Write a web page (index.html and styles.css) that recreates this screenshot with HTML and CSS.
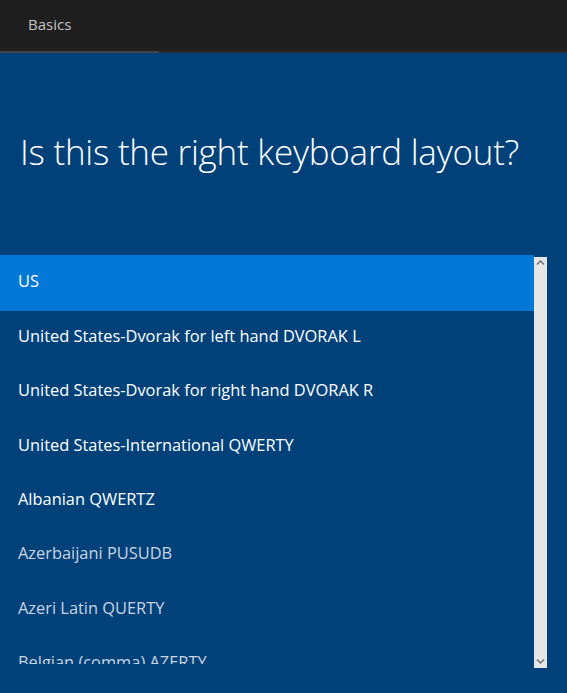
FILE: index.html
```html
<!DOCTYPE html>
<html>
<head>
<meta charset="utf-8">
<link rel="stylesheet" href="styles.css">
</head>
<body>
<header class="topbar">
  <span class="topbar-title">Basics</span>
</header>
<div class="topline"><div class="topline-progress"></div></div>
<main class="page">
  <h1 class="heading">Is this the right keyboard layout?</h1>
  <div class="listwrap">
    <ul class="list">
      <li class="item selected">US</li>
      <li class="item">United States-Dvorak for left hand DVORAK L</li>
      <li class="item">United States-Dvorak for right hand DVORAK R</li>
      <li class="item">United States-International QWERTY</li>
      <li class="item">Albanian QWERTZ</li>
      <li class="item dim">Azerbaijani PUSUDB</li>
      <li class="item dim">Azeri Latin QUERTY</li>
      <li class="item dim">Belgian (comma) AZERTY</li>
    </ul>
    <div class="scrollbar">
      <svg class="arrow" width="13" height="10" viewBox="0 0 13 10"><path d="M3 6.5 L6.5 3 L10 6.5" fill="none" stroke="#6a6a6a" stroke-width="1.3"/></svg>
      <svg class="arrow" width="13" height="10" viewBox="0 0 13 10"><path d="M3 3.5 L6.5 7 L10 3.5" fill="none" stroke="#6a6a6a" stroke-width="1.3"/></svg>
    </div>
  </div>
</main>
</body>
</html>
```
FILE: styles.css
```css
* { box-sizing: border-box; }
html, body { margin: 0; padding: 0; }
body {
  width: 567px;
  height: 693px;
  overflow: hidden;
  background: #00417a;
  font-family: "Open Sans", "Noto Sans", sans-serif;
}
.topbar {
  height: 51px;
  background: #1f1f1f;
  display: flex;
  align-items: center;
  padding-left: 28px;
  padding-bottom: 3px;
}
.topbar-title {
  color: #c4c4c4;
  font-size: 15px;
}
.topline {
  height: 2px;
  background: #2b2b2b;
}
.topline-progress {
  width: 159px;
  height: 2px;
  background: #444444;
}
.page {
  display: flex;
  flex-direction: column;
}
.heading {
  margin: 0;
  padding: 75px 0 0 20px;
  height: 202px;
  color: #ffffff;
  font-weight: 300;
  font-size: 35px;
  letter-spacing: -0.25px;
  line-height: 48px;
}
.listwrap {
  display: flex;
  align-items: flex-start;
}
.list {
  list-style: none;
  margin: 0;
  padding: 0;
  width: 534px;
  height: 409px;
  overflow: hidden;
}
.item {
  height: 54.3px;
  display: flex;
  align-items: center;
  padding-left: 18px;
  padding-bottom: 5px;
  color: #ffffff;
  font-size: 16.4px;
  white-space: nowrap;
}
.item.selected {
  background: #0078d7;
  height: 56px;
}
.item.dim { color: #c9d5e2; }
.scrollbar {
  width: 13px;
  height: 411px;
  margin-top: 2px;
  background: #e6e6e6;
  display: flex;
  flex-direction: column;
  justify-content: space-between;
  padding: 1px 0 2px;
}
.arrow { display: block; }
```
